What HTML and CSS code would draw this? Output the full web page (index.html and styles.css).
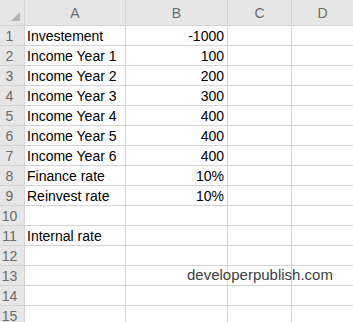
FILE: index.html
```html
<!DOCTYPE html>
<html>
<head>
<meta charset="utf-8">
<link rel="stylesheet" href="styles.css">
</head>
<body>
<div class="sheet">
  <div class="grid">
    <div class="row">
      <div class="corner"><span class="tri"></span></div>
      <div class="colhead">A</div>
      <div class="colhead">B</div>
      <div class="colhead">C</div>
      <div class="colhead">D</div>
    </div>
    <div class="row"><div class="rowhead">1</div><div class="cell">Investement</div><div class="cell num">-1000</div><div class="cell"></div><div class="cell"></div></div>
    <div class="row"><div class="rowhead">2</div><div class="cell">Income Year 1</div><div class="cell num">100</div><div class="cell"></div><div class="cell"></div></div>
    <div class="row"><div class="rowhead">3</div><div class="cell">Income Year 2</div><div class="cell num">200</div><div class="cell"></div><div class="cell"></div></div>
    <div class="row"><div class="rowhead">4</div><div class="cell">Income Year 3</div><div class="cell num">300</div><div class="cell"></div><div class="cell"></div></div>
    <div class="row"><div class="rowhead">5</div><div class="cell">Income Year 4</div><div class="cell num">400</div><div class="cell"></div><div class="cell"></div></div>
    <div class="row"><div class="rowhead">6</div><div class="cell">Income Year 5</div><div class="cell num">400</div><div class="cell"></div><div class="cell"></div></div>
    <div class="row"><div class="rowhead">7</div><div class="cell">Income Year 6</div><div class="cell num">400</div><div class="cell"></div><div class="cell"></div></div>
    <div class="row"><div class="rowhead">8</div><div class="cell">Finance rate</div><div class="cell num">10%</div><div class="cell"></div><div class="cell"></div></div>
    <div class="row"><div class="rowhead">9</div><div class="cell">Reinvest rate</div><div class="cell num">10%</div><div class="cell"></div><div class="cell"></div></div>
    <div class="row"><div class="rowhead">10</div><div class="cell"></div><div class="cell"></div><div class="cell"></div><div class="cell"></div></div>
    <div class="row"><div class="rowhead">11</div><div class="cell">Internal rate</div><div class="cell"></div><div class="cell"></div><div class="cell"></div></div>
    <div class="row"><div class="rowhead">12</div><div class="cell"></div><div class="cell"></div><div class="cell"></div><div class="cell"></div></div>
    <div class="row"><div class="rowhead">13</div><div class="cell"></div><div class="cell"></div><div class="cell"></div><div class="cell"></div></div>
    <div class="row"><div class="rowhead">14</div><div class="cell"></div><div class="cell"></div><div class="cell"></div><div class="cell"></div></div>
    <div class="row"><div class="rowhead">15</div><div class="cell"></div><div class="cell"></div><div class="cell"></div><div class="cell"></div></div>
  </div>
  <div class="watermark">developerpublish.com</div>
</div>
</body>
</html>
```

FILE: styles.css
```css
html, body {
  margin: 0;
  padding: 0;
  background: #ffffff;
}

.sheet {
  position: relative;
  width: 353px;
  height: 322px;
  overflow: hidden;
  font-family: "Liberation Sans", Arial, sans-serif;
}

.grid {
  display: grid;
  grid-template-columns: 24px 100px 101px 63px 61px;
  grid-auto-rows: 19px;
  grid-template-rows: 25px;
  gap: 1px;
  background: #d4d4d4;
}

.row {
  display: contents;
}

.corner {
  position: relative;
  background: #e6e6e6;
}

.tri {
  position: absolute;
  left: 11px;
  top: 12px;
  width: 0;
  height: 0;
  border-left: 9px solid transparent;
  border-bottom: 9px solid #b4b4b4;
}

.colhead {
  background: #e6e6e6;
  color: #6b6b6b;
  font-size: 14px;
  display: flex;
  align-items: center;
  justify-content: center;
  padding-top: 1px;
}

.rowhead {
  background: #e6e6e6;
  color: #6b6b6b;
  font-size: 14px;
  display: flex;
  align-items: flex-end;
  justify-content: center;
  padding-right: 5px;
  padding-bottom: 1px;
  line-height: 16px;
}

.cell {
  background: #ffffff;
  color: #000000;
  font-size: 14px;
  line-height: 16px;
  display: flex;
  align-items: flex-end;
  padding: 0 2px 1px 2px;
  white-space: nowrap;
}

.num {
  justify-content: flex-end;
  padding-right: 3px;
}

.watermark {
  position: absolute;
  left: 187px;
  top: 266px;
  font-size: 15px;
  line-height: 18px;
  color: #404040;
}
```
